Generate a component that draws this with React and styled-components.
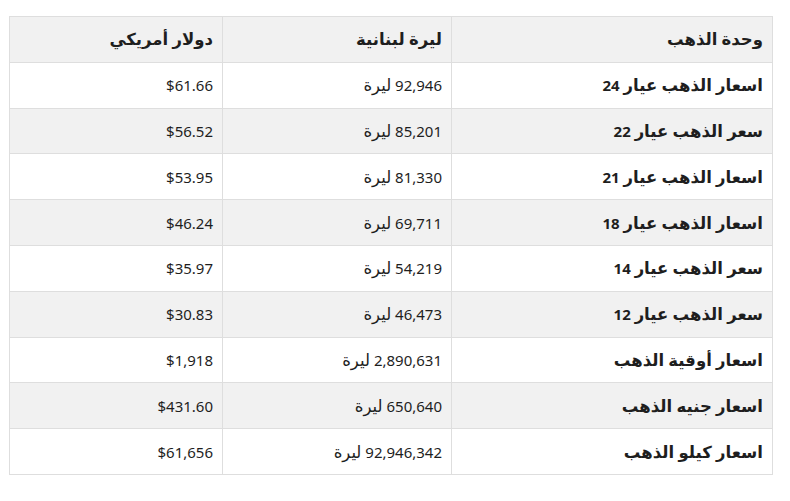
import styled, { createGlobalStyle } from "styled-components";

const GlobalStyle = createGlobalStyle`
  body {
    margin: 0;
    background: #fff;
    font-family: "Noto Sans", "DejaVu Sans", sans-serif;
    color: #222;
  }
`;

// each cell: [arabic part, number part]
const rows = [
  ["اسعار الذهب عيار", "24", "92,946", "$61.66"],
  ["سعر الذهب عيار", "22", "85,201", "$56.52"],
  ["اسعار الذهب عيار", "21", "81,330", "$53.95"],
  ["اسعار الذهب عيار", "18", "69,711", "$46.24"],
  ["سعر الذهب عيار", "14", "54,219", "$35.97"],
  ["سعر الذهب عيار", "12", "46,473", "$30.83"],
  ["اسعار أوقية الذهب", "", "2,890,631", "$1,918"],
  ["اسعار جنيه الذهب", "", "650,640", "$431.60"],
  ["اسعار كيلو الذهب", "", "92,946,342", "$61,656"],
];

const App = () => {
  return (
    <Page dir="rtl">
      <GlobalStyle />
      <Table>
        <colgroup>
          <col style={{ width: 321 }} />
          <col style={{ width: 229 }} />
          <col style={{ width: 213 }} />
        </colgroup>
        <thead>
          <tr>
            <Th><Ar>وحدة الذهب</Ar></Th>
            <Th><Ar>ليرة لبنانية</Ar></Th>
            <Th><Ar>دولار أمريكي</Ar></Th>
          </tr>
        </thead>
        <tbody>
          {rows.map((r, i) => (
            <Row key={i} $shaded={i % 2 === 1}>
              <Td $bold>
                <Ar>{r[0]}</Ar>
                {r[1] && " " + r[1]}
              </Td>
              <Td>
                {r[2]} <Ar>ليرة</Ar>
              </Td>
              <Td>{r[3]}</Td>
            </Row>
          ))}
        </tbody>
      </Table>
    </Page>
  );
};

export default App;

const Page = styled.div`
  padding: 16px 17px 0 10px;
`;

const Table = styled.table`
  width: 763px;
  border-collapse: collapse;
  table-layout: fixed;
  font-size: 15px;
`;

const Ar = styled.span`
  font-size: 16.5px;
`;

const Th = styled.th`
  background: #f1f1f1;
  border: 1px solid #dedede;
  text-align: right;
  font-weight: 700;
  height: 44.8px;
  padding: 0 9px;
  line-height: 22px;
  color: #1e1e1e;
`;

const Row = styled.tr`
  background: ${(p) => (p.$shaded ? "#f1f1f1" : "#fff")};
`;

const Td = styled.td`
  border: 1px solid #dedede;
  text-align: right;
  height: 44.8px;
  padding: 0 9px;
  line-height: 22px;
  font-weight: ${(p) => (p.$bold ? 700 : 400)};
  color: #1e1e1e;
`;
